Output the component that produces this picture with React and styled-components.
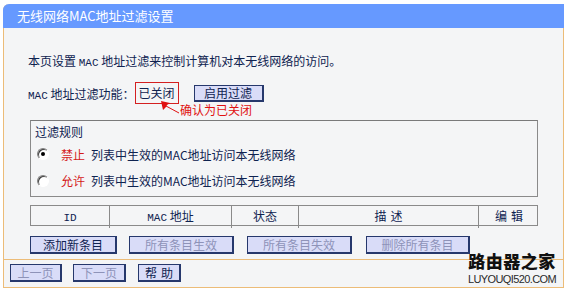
import React from 'react';
import styled, { createGlobalStyle } from 'styled-components';

const GlobalStyle = createGlobalStyle`
  body {
    margin: 0;
    background: #ffffff;
    font-family: "Noto Sans CJK SC", "Liberation Sans", sans-serif;
    font-size: 12px;
    color: #0f2350;
  }
`;

const Page = styled.div`
  position: relative;
  width: 570px;
  height: 291px;
  padding: 4px 0 0 3px;
  box-sizing: border-box;
`;

const Panel = styled.div`
  width: 561px;
  border: 1px solid #ecbc78;
  border-top: none;
  border-top-left-radius: 6px;
  background: #f4f5f6;
  box-sizing: border-box;
`;

const Header = styled.div`
  height: 24px;
  margin: 0 -1px;
  background: #6699ff;
  border-top-left-radius: 6px;
  color: #ffffff;
  font-size: 13px;
  line-height: 24px;
  padding-left: 14px;
`;

const Content = styled.div`
  padding: 25px 25px 5px 26px;
`;

const Line = styled.div`
  margin-left: -2px;
  height: 16px;
  line-height: 16px;
  white-space: nowrap;
`;

const Mono = styled.span`
  font-family: "Liberation Mono", monospace;
  font-size: 11px;
`;

const StatusRow = styled.div`
  position: relative;
  display: flex;
  align-items: center;
  margin: 13px 0 0 -2px;
  height: 22px;
`;

const StatusBox = styled.span`
  display: inline-block;
  height: 20px;
  line-height: 20px;
  padding: 0 3px;
  border: 1px solid #d42020;
`;

const Button = styled.button`
  height: ${({ h }) => h || 18}px;
  width: ${({ w }) => w}px;
  margin-left: ${({ gap }) => gap || 0}px;
  padding: 0;
  background: #d9dcf8;
  border: 1px solid #26386c;
  border-right-width: 2px;
  border-bottom-width: 2px;
  color: ${({ disabled }) => (disabled ? '#8e93b8' : '#0f2350')};
  font-family: "Noto Sans CJK SC", sans-serif;
  font-size: 12px;
  line-height: 14px;
  letter-spacing: ${({ spaced }) => (spaced ? '4px' : '0')};
  text-indent: ${({ spaced }) => (spaced ? '4px' : '0')};
  box-sizing: border-box;
  cursor: default;
`;

const Note = styled.span`
  position: absolute;
  left: 152px;
  top: 20px;
  color: #e01010;
  line-height: 16px;
  white-space: nowrap;
`;

const Arrow = styled.svg`
  position: absolute;
  left: 133px;
  top: 19px;
`;

const RuleBox = styled.div`
  margin-top: 16px;
  width: 508px;
  height: 77px;
  border: 1px solid #8a8a8a;
  border-top-color: #7a7a7a;
  padding: 2px 0 0 4px;
  box-sizing: border-box;
`;

const Legend = styled.div`
  height: 18px;
  line-height: 18px;
`;

const RadioRow = styled.div`
  display: flex;
  align-items: center;
  height: ${({ h }) => h}px;
  padding-left: 2px;
  white-space: nowrap;
`;

const Radio = styled.span`
  position: relative;
  width: 12px;
  height: 12px;
  border-radius: 50%;
  border: 1px solid;
  border-color: #808080 #ffffff #ffffff #808080;
  background: #ffffff;
  box-shadow: inset 1px 1px 0 #404040;
  margin-right: 12px;
  box-sizing: border-box;

  &::after {
    content: '';
    display: ${({ checked }) => (checked ? 'block' : 'none')};
    position: absolute;
    left: 3px;
    top: 3px;
    width: 4px;
    height: 4px;
    border-radius: 50%;
    background: #000000;
  }
`;

const Red = styled.span`
  color: #d41a1a;
  margin-right: 6px;
`;

const Table = styled.div`
  display: grid;
  grid-template-columns: 78px 122px 67px 180px 61px;
  margin-top: 8px;
  width: 508px;
  height: 21px;
  border: 1px solid #8a8a8a;
  box-sizing: border-box;
`;

const Th = styled.div`
  text-align: center;
  line-height: 19px;
  border-left: ${({ first }) => (first ? 'none' : '1px solid #8a8a8a')};
  letter-spacing: ${({ spaced }) => (spaced ? '4px' : '0')};
  text-indent: ${({ spaced }) => (spaced ? '4px' : '0')};
`;

const ButtonRow = styled.div`
  display: flex;
  margin-top: 10px;
`;

const Footer = styled.div`
  display: flex;
  border-top: 1px solid #ecbc78;
  padding: 4px 0 5px 6px;
`;

const Watermark = styled.div`
  position: absolute;
  left: 466px;
  top: 252px;
  display: flex;
  flex-direction: column;
  align-items: center;
  width: 92px;
`;

const MarkTitle = styled.div`
  font-family: "Noto Sans CJK SC", sans-serif;
  font-weight: 900;
  font-size: 17px;
  line-height: 17px;
  height: 17px;
  color: #111111;
  letter-spacing: 0.5px;
`;

const MarkUrl = styled.div`
  margin-top: 5px;
  font-family: "Liberation Sans", sans-serif;
  font-size: 11px;
  line-height: 11px;
  color: #2a2a2a;
  letter-spacing: -0.6px;
`;

export default function App() {
  return (
    <Page>
      <GlobalStyle />
      <Panel>
        <Header>无线网络MAC地址过滤设置</Header>
        <Content>
          <Line>本页设置 <Mono>MAC</Mono> 地址过滤来控制计算机对本无线网络的访问。</Line>
          <StatusRow>
            <span><Mono>MAC</Mono> 地址过滤功能：</span>
            <StatusBox>已关闭</StatusBox>
            <Button w={70} h={17} gap={15}>启用过滤</Button>
            <Arrow width="22" height="16" viewBox="0 0 22 16">
              <polygon points="0,0 9,2 6,4 5,6 2,9" fill="#e01010" />
              <line x1="5" y1="5" x2="18" y2="12" stroke="#e01010" strokeWidth="1" />
            </Arrow>
            <Note>确认为已关闭</Note>
          </StatusRow>
          <RuleBox>
            <Legend>过滤规则</Legend>
            <RadioRow h={26}>
              <Radio checked />
              <Red>禁止</Red>列表中生效的MAC地址访问本无线网络
            </RadioRow>
            <RadioRow h={27}>
              <Radio />
              <Red>允许</Red>列表中生效的MAC地址访问本无线网络
            </RadioRow>
          </RuleBox>
          <Table>
            <Th first><Mono>ID</Mono></Th>
            <Th><Mono>MAC</Mono> 地址</Th>
            <Th>状态</Th>
            <Th spaced>描述</Th>
            <Th spaced>编辑</Th>
          </Table>
          <ButtonRow>
            <Button w={87}>添加新条目</Button>
            <Button w={105} gap={12} disabled>所有条目生效</Button>
            <Button w={105} gap={13} disabled>所有条目失效</Button>
            <Button w={104} gap={14} disabled>删除所有条目</Button>
          </ButtonRow>
        </Content>
        <Footer>
          <Button w={52} disabled>上一页</Button>
          <Button w={53} gap={11} disabled>下一页</Button>
          <Button w={43} gap={12} spaced>帮助</Button>
        </Footer>
      </Panel>
      <Watermark>
        <MarkTitle>路由器之家</MarkTitle>
        <MarkUrl>LUYOUQI520.COM</MarkUrl>
      </Watermark>
    </Page>
  );
}
